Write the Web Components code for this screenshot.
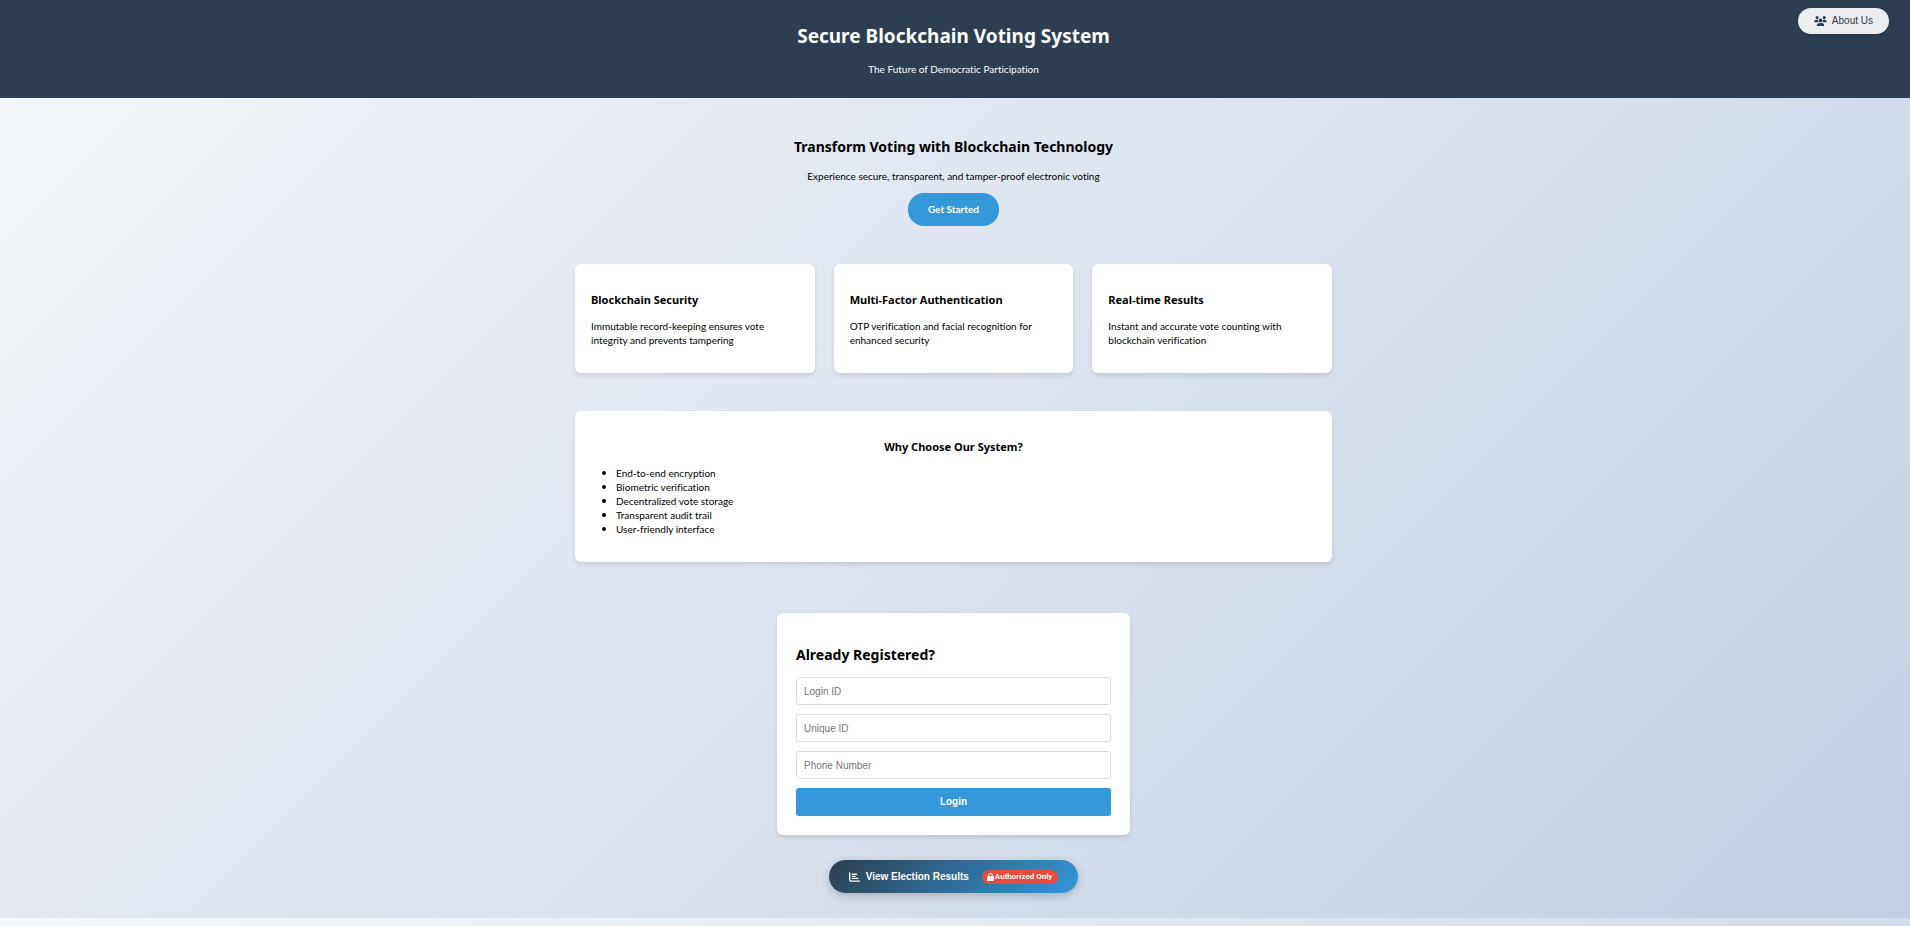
<!DOCTYPE html>
<html lang="en">
<head>
<meta charset="utf-8">
<meta name="viewport" content="width=device-width, initial-scale=1">
<title>Secure Blockchain Voting System</title>
<style>
  :root {
    --navy: #2c3e50;
    --blue: #3498db;
    --red: #e74c3c;
    --shadow: 0 3px 4px rgba(0, 0, 0, 0.1);
    --text-font: "Segoe UI", Lato, sans-serif;
    --heading-font: "Segoe UI", "Noto Sans", sans-serif;
    --control-font: Arial, "Liberation Sans", sans-serif;
  }
  body {
    margin: 0;
    font: 10px/14px var(--text-font);
    font-variant-ligatures: none;
    color: #000;
    background: linear-gradient(135deg, #f5f7fa 0%, #c3cfe2 100%);
  }
</style>
</head>
<body>
<voting-page></voting-page>

<script>
const ICONS = {
  users: ['0 0 640 512', 'M144 0a80 80 0 1 1 0 160A80 80 0 1 1 144 0zM512 0a80 80 0 1 1 0 160A80 80 0 1 1 512 0zM0 298.7C0 239.8 47.8 192 106.7 192l42.7 0c15.9 0 31 3.5 44.6 9.7c-1.3 7.2-1.9 14.7-1.9 22.3c0 38.2 16.8 72.5 43.3 96c-.2 0-.4 0-.7 0L21.3 320C9.6 320 0 310.4 0 298.7zM405.3 320c-.2 0-.4 0-.7 0c26.6-23.5 43.3-57.8 43.3-96c0-7.6-.7-15-1.9-22.3c13.6-6.3 28.7-9.7 44.6-9.7l42.7 0C592.2 192 640 239.8 640 298.7c0 11.8-9.6 21.3-21.3 21.3l-213.3 0zM224 224a96 96 0 1 1 192 0 96 96 0 1 1 -192 0zM128 485.3C128 411.7 187.7 352 261.3 352l117.3 0C452.3 352 512 411.7 512 485.3c0 14.7-11.9 26.7-26.7 26.7l-330.7 0c-14.7 0-26.7-11.9-26.7-26.7z'],
  chart: ['0 32 512 448', 'M32 32c17.7 0 32 14.3 32 32l0 336c0 8.8 7.2 16 16 16l400 0c17.7 0 32 14.3 32 32s-14.3 32-32 32L80 480c-44.2 0-80-35.8-80-80L0 64C0 46.3 14.3 32 32 32zm96 96c0-17.7 14.3-32 32-32l192 0c17.7 0 32 14.3 32 32s-14.3 32-32 32l-192 0c-17.7 0-32-14.3-32-32zm32 64l128 0c17.7 0 32 14.3 32 32s-14.3 32-32 32l-128 0c-17.7 0-32-14.3-32-32s14.3-32 32-32zm0 96l256 0c17.7 0 32 14.3 32 32s-14.3 32-32 32l-256 0c-17.7 0-32-14.3-32-32s14.3-32 32-32z'],
  lock: ['0 0 448 512', 'M144 144l0 48 160 0 0-48c0-44.2-35.8-80-80-80s-80 35.8-80 80zM80 192l0-48C80 64.5 144.5 0 224 0s144 64.5 144 144l0 48 16 0c35.3 0 64 28.7 64 64l0 192c0 35.3-28.7 64-64 64L64 512c-35.3 0-64-28.7-64-64L0 256c0-35.3 28.7-64 64-64l16 0z']
};

function define(name, html) {
  customElements.define(name, class extends HTMLElement {
    constructor() {
      super();
      this.attachShadow({ mode: 'open' }).innerHTML =
        typeof html === 'function' ? html(this) : html;
    }
  });
}

define('solid-icon', el => {
  const [box, d] = ICONS[el.getAttribute('name')];
  return `<style>
    :host { display: inline-flex; flex: none; }
    svg { display: block; width: 100%; height: 100%; fill: currentColor; }
  </style><svg viewBox="${box}" aria-hidden="true"><path d="${d}"/></svg>`;
});

define('site-header', `<style>
    :host { display: block; position: relative; padding: 19px 22px 22px 19px; background: var(--navy); color: #fff; text-align: center; }
    h1 { margin: 0 0 9px; font: 700 19px/34px var(--heading-font); }
    p { margin: 0; }
    ::slotted(about-link) { position: absolute; top: 8px; right: 21px; }
  </style>
  <header><h1><slot name="title"></slot></h1><p><slot name="tagline"></slot></p></header><slot></slot>`);

define('about-link', `<style>
    :host { display: block; }
    a { display: flex; align-items: center; gap: 5px; height: 26px; padding: 0 16px; border-radius: 16px;
        background: #ecedef; color: var(--navy); text-decoration: none; font: 10px/14px var(--control-font);
        box-shadow: 0 1px 3px rgba(0, 0, 0, 0.1); }
    solid-icon { width: 13px; height: 10px; }
  </style><a href="#about"><solid-icon name="users"></solid-icon><slot></slot></a>`);

define('hero-banner', `<style>
    :host { display: block; padding: 38px 0; text-align: center; }
    h2 { margin: 0 0 11px; font: 700 14px/22px var(--heading-font); }
    p { margin: 0 0 10px; }
    a { display: inline-block; vertical-align: top; padding: 10px 20px; line-height: 13px; border-radius: 16px; background: var(--blue);
        color: #fff; font-weight: 700; text-decoration: none; }
  </style>
  <section><h2><slot name="title"></slot></h2><p><slot></slot></p><a href="#register">Get Started</a></section>`);

define('feature-card', `<style>
    :host { display: block; padding: 25px 16px 26px; border-radius: 6px; background: #fff; box-shadow: var(--shadow); }
    h3 { margin: 0 0 8px; font: 700 11px/22px var(--heading-font); }
    p { margin: 0; }
  </style><article><h3><slot name="title"></slot></h3><p><slot></slot></p></article>`);

define('card-row', `<style>
    :host { display: grid; grid-template-columns: repeat(auto-fit, minmax(158px, 1fr)); gap: 19px; }
  </style><slot></slot>`);

define('reasons-panel', `<style>
    :host { display: block; margin-top: 38px; padding: 25px 16px 26px; border-radius: 6px; background: #fff; box-shadow: var(--shadow); }
    h3 { margin: 0 0 8px; text-align: center; font: 700 11px/22px var(--heading-font); }
    ul { margin: 0; padding: 0 0 0 11px; list-style: none; }
    li { display: flex; align-items: center; gap: 10px; }
    li::before { content: ""; width: 4px; height: 4px; border-radius: 50%; background: currentColor; }
  </style>
  <section><h3>Why Choose Our System?</h3>
    <ul><li>End-to-end encryption</li><li>Biometric verification</li><li>Decentralized vote storage</li><li>Transparent audit trail</li><li>User-friendly interface</li></ul>
  </section>`);

define('login-field', el => `<style>
    :host { display: block; }
    input { display: block; box-sizing: border-box; width: 100%; height: 28px; padding: 0 7px; border: 1px solid #ddd; border-radius: 3px;
            background: #fff; font: 10px/14px var(--control-font); }
    input::placeholder { color: #757575; }
  </style><input type="${el.getAttribute('type') || 'text'}" placeholder="${el.getAttribute('label')}" aria-label="${el.getAttribute('label')}">`);

define('login-card', `<style>
    :host { display: block; box-sizing: border-box; width: 100%; max-width: 353px; margin: 51px auto 25px; padding: 32px 19px 19px;
            border-radius: 6px; background: #fff; box-shadow: var(--shadow); }
    h2 { margin: 0 0 12px; font: 700 14px/20px var(--heading-font); }
    form { display: grid; gap: 9px; }
    button { height: 28px; padding: 0; border: 0; border-radius: 3px; background: var(--blue); color: #fff;
             font: 700 10px/14px var(--control-font); }
  </style>
  <h2>Already Registered?</h2>
  <form>
    <login-field label="Login ID"></login-field>
    <login-field label="Unique ID"></login-field>
    <login-field label="Phone Number" type="tel"></login-field>
    <button type="button">Login</button>
  </form>`);

define('results-button', `<style>
    :host { display: flex; justify-content: center; }
    button { display: flex; align-items: center; height: 33px; padding: 0 20px; border: 0; border-radius: 17px; color: #fff;
             background: linear-gradient(135deg, var(--navy), var(--blue)); box-shadow: 0 3px 9px rgba(0, 0, 0, 0.2);
             font: 700 10px/14px var(--control-font); }
    .chart { width: 11px; height: 10px; margin-right: 6px; }
    .badge { display: flex; align-items: center; gap: 1px; height: 14px; margin-left: 13px; padding: 0 6px 0 5px; border-radius: 8px;
             background: var(--red); font: 700 8px/14px Roboto, sans-serif; }
    .lock { width: 7px; height: 8px; }
  </style>
  <button type="button"><solid-icon class="chart" name="chart"></solid-icon><span>View Election Results</span>
    <span class="badge"><solid-icon class="lock" name="lock"></solid-icon><span>Authorized Only</span></span></button>`);

define('voting-page', `<style>
    :host { display: block; }
    main { max-width: 757px; margin: 0 auto; padding: 0 22px 25px 19px; }
  </style>
  <site-header>
    <span slot="title">Secure Blockchain Voting System</span>
    <span slot="tagline">The Future of Democratic Participation</span>
    <about-link>About Us</about-link>
  </site-header>
  <main>
    <hero-banner><span slot="title">Transform Voting with Blockchain Technology</span>Experience secure, transparent, and tamper-proof electronic voting</hero-banner>
    <card-row>
      <feature-card><span slot="title">Blockchain Security</span>Immutable record-keeping ensures vote integrity and prevents tampering</feature-card>
      <feature-card><span slot="title">Multi-Factor Authentication</span>OTP verification and facial recognition for enhanced security</feature-card>
      <feature-card><span slot="title">Real-time Results</span>Instant and accurate vote counting with blockchain verification</feature-card>
    </card-row>
    <reasons-panel></reasons-panel>
    <login-card></login-card>
    <results-button></results-button>
  </main>`);
</script>
</body>
</html>
